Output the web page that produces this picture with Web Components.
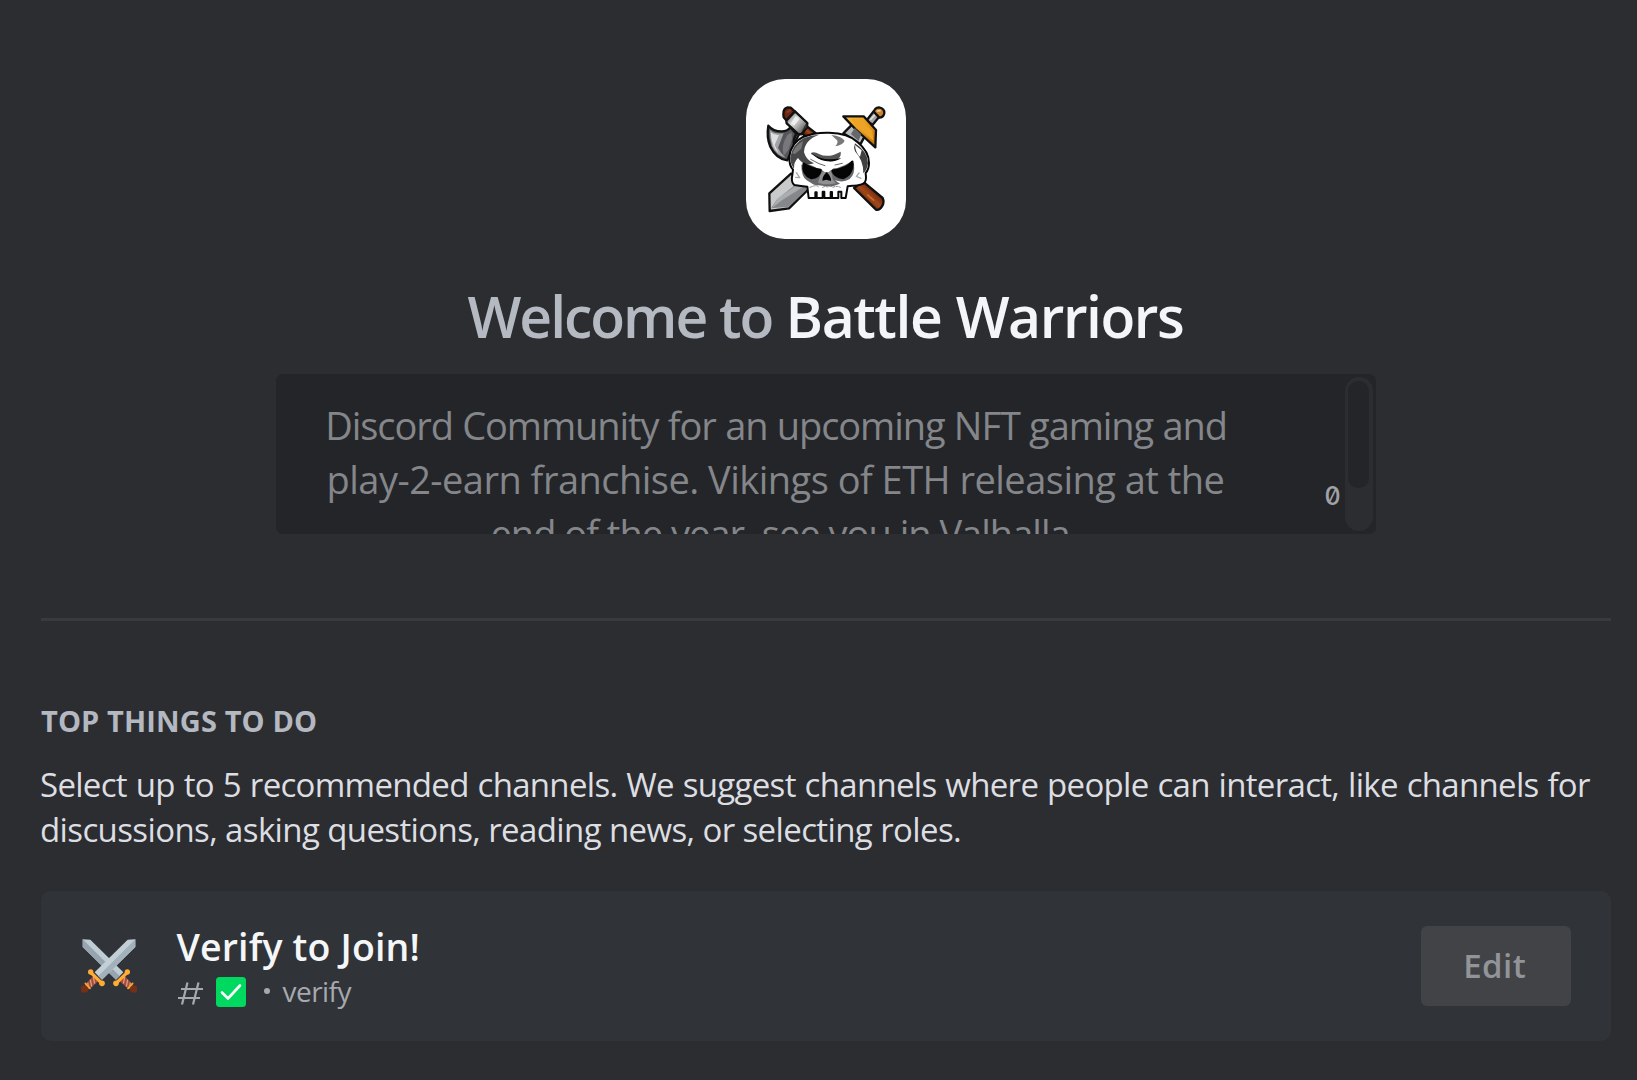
<!DOCTYPE html>
<html lang="en">
<head>
<meta charset="utf-8">
<title>Welcome to Battle Warriors</title>
<style>
html,body{margin:0;height:100%;background:#2c2d31;overflow:hidden}
body{font-family:"Open Sans","Noto Sans",sans-serif}
</style>
</head>
<body>
<welcome-page></welcome-page>
<script>
const define = (name, html, ready) => {
  const t = document.createElement('template');
  t.innerHTML = html;
  customElements.define(name, class extends HTMLElement {
    constructor() {
      super();
      this.attachShadow({ mode: 'open' }).append(t.content.cloneNode(true));
    }
    connectedCallback() { if (ready) ready(this); }
  });
};

/* One line of text whose ink is spread over the given width; gap widens the word spaces. */
define('fit-line', `<style>
:host{display:block;white-space:pre;flex:none}
span{display:inline-block}
</style><span></span>`, el => {
  const span = el.shadowRoot.querySelector('span');
  const text = el.getAttribute('text'), w = +el.getAttribute('ink'), gap = +(el.getAttribute('gap') || 0);
  span.textContent = text;
  const cs = getComputedStyle(span);
  const c = document.createElement('canvas').getContext('2d');
  c.font = `${cs.fontWeight} ${cs.fontSize} ${cs.fontFamily}`;
  const m = c.measureText(text);
  const ink = m.actualBoundingBoxLeft + m.actualBoundingBoxRight + gap * (text.split(' ').length - 1);
  span.style.wordSpacing = gap + 'px';
  if (text.length > 1) span.style.letterSpacing = (w - ink) / (text.length - 1) + 'px';
  span.style.marginLeft = m.actualBoundingBoxLeft + 'px';
  el.style.width = w + 'px';
});

define('server-logo', `<style>
:host{display:block;width:160px;height:160px;border-radius:39px;background:#fff;overflow:hidden}
svg{display:block}
</style>
<svg width="160" height="160" viewBox="30 27 480 480" stroke-linejoin="round" stroke-linecap="round">
<defs>
<linearGradient id="wood" x1="0" y1="1" x2="1" y2="0"><stop offset=".25" stop-color="#4a1708"/><stop offset=".5" stop-color="#a4491b"/><stop offset=".75" stop-color="#5b1f0b"/></linearGradient>
<linearGradient id="steel" x1="0" y1="0" x2="1" y2="1"><stop offset="0" stop-color="#555"/><stop offset=".4" stop-color="#ddd"/><stop offset=".6" stop-color="#aaa"/><stop offset="1" stop-color="#333"/></linearGradient>
<linearGradient id="gold" x1="0" y1="0" x2="1" y2="1"><stop offset="0" stop-color="#f7bd3c"/><stop offset=".5" stop-color="#e79a1b"/><stop offset="1" stop-color="#b96a0a"/></linearGradient>
</defs>
<g stroke="#111" stroke-width="7">
<path d="M178 186L190 192L173 222L168 212Z" fill="#888"/>
<path d="M198 190L214 170L240 190L216 206Z" fill="url(#wood)"/>
<path d="M142 133Q141 116 155 112L164 113L177 125L152 152L143 142Z" fill="#6f2610"/>
<path d="M151 152L177 124L214 159L213 172L196 193L187 192L152 160Z" fill="url(#steel)"/>
<path d="M97 167Q111 184 137 184Q154 184 163 172L181 192Q170 209 174 225L154 271Q121 267 103 230Q91 202 97 167Z" fill="#55565a"/>
<path d="M322 190L348 164L386 199L373 223Z" fill="#b8babd"/>
<path d="M391 152L413 124L431 139L410 164Z" fill="#a6a6a6"/>
<path d="M414 126Q415 113 429 112Q446 115 445 130Q442 143 430 143Z" fill="#c8862c"/>
<path d="M322 139L383 139L420 180L418 232L358 177Z" fill="url(#gold)"/>
<path d="M354 354L381 335L440 384Q446 397 438 409Q430 422 420 419Z" fill="url(#wood)"/>
<path d="M100 370L165 311L235 340L159 415L101 423Z" fill="#c9cacc"/>
</g>
<path d="M102 180Q116 193 143 190L126 233Q135 252 149 263Q121 257 108 229Q101 205 102 180Z" fill="#a3a4a7"/>
<path d="M104 187Q115 197 129 195L116 225L128 250Q106 231 104 187Z" fill="#dedfe0"/>
<path d="M155 194L167 187L168 208L157 240L143 257Q134 224 155 194Z" fill="#77787b"/>
<path d="M165 159L179 138L190 148L174 167Z" fill="#eee"/>
<path d="M197 184L209 162L213 165L211 174Z" fill="#333"/>
<path d="M105 415L122 389L198 328L230 342L158 410Z" fill="#85878a"/>
<path d="M124 386L202 331L224 337L140 389L108 414Z" fill="#aaacae"/>
<path d="M356 174L376 193L367 213L345 192Z" fill="#65676a"/>
<path d="M346 147L377 150L409 183L412 212L364 171Z" fill="#eda426"/>
<path d="M404 148L415 136" stroke="#ddd" stroke-width="5"/><path d="M424 123L432 122" stroke="#f3cf90" stroke-width="5"/>
<path d="M385 367L418 395" stroke="#9c4518" stroke-width="9"/><path d="M395 375L413 391" stroke="#d0702f" stroke-width="4"/>
<path d="M154 126L163 121" stroke="#8f3c1c" stroke-width="6"/>
<path d="M175 345Q164 336 169 315L171 299Q159 286 160 260Q165 218 201 201Q233 187 279 188Q337 189 364 216Q399 244 399 279Q399 298 389 309L390 322Q391 341 373 344Q360 348 350 347L335 349L329 384H316V365H307V384H288V366H284V384H265V365H260V384H242V367H238V384H218L214 350Q195 348 175 345Z" fill="#fff" stroke="#090909" stroke-width="6"/>
<path d="M163 262Q169 222 204 204Q226 195 249 194Q205 210 204 247Q211 271 234 280L214 285Q196 279 186 264Q173 276 174 296Q162 281 163 262Z" fill="#47484a"/>
<path d="M169 250Q178 225 201 213L196 236L177 252Z" fill="#777"/>
<path d="M286 195Q317 199 326 212Q321 225 298 229Q311 214 299 207Z" fill="#797979"/>
<path d="M357 220Q395 244 396 279Q394 299 382 310Q383 272 357 244L354 233Z" fill="#3f4042"/>
<path d="M357 225L377 241L372 260Q359 249 357 225Z" fill="#fff"/>
<path d="M226 248Q236 244 249 252Q276 266 314 245Q318 270 283 274Q254 273 239 259L225 252Z" fill="#555"/>
<path d="M226 248Q258 276 316 264Q298 278 268 273Q242 268 226 248Z" fill="#080808"/>
<path d="M196 284Q224 280 246 296Q260 296 272 306Q286 292 302 295Q328 287 347 274L354 281Q358 313 341 327Q323 339 297 331L312 341L286 350L234 344L212 331Q196 320 196 284Z" fill="#66686a"/>
<path d="M254 312L262 304L272 309L283 303L288 312L290 328L300 340L271 345L246 338Z" fill="#8e9092"/>
<path d="M240 284L267 290L272 301L283 290L300 285L290 297L278 306H266L252 296Z" fill="#fff"/>
<path d="M203 281Q198 313 225 324Q250 323 254 300Q227 296 203 281Z" fill="#050505" stroke="#050505" stroke-width="7"/>
<path d="M349 275Q333 296 290 302Q294 320 322 324Q352 312 349 275Z" fill="#050505" stroke="#050505" stroke-width="7"/>
<path d="M272 307Q258 319 259 332L271 329L285 333Q286 319 272 307Z" fill="#050505"/>
<path d="M224 268L249 281L267 287M319 280L297 285M264 345L278 344" fill="none" stroke="#686868" stroke-width="3"/>
<path d="M181 308L191 323L179 322M369 309L361 319L375 325" fill="none" stroke="#aaa" stroke-width="4"/>
<path d="M222 352Q245 342 248 352M260 352Q268 347 278 352M291 352Q302 346 313 352" fill="none" stroke="#888" stroke-width="3" stroke-dasharray="6 4"/>
</svg>`);

define('hero-blurb', `<style>
:host{display:flex;box-sizing:border-box;width:1100px;height:160px;border-radius:7px;background:#232529;overflow:hidden;padding-right:3.5px;justify-content:space-between}
.t{width:1001px;padding-top:24px;display:flex;flex-direction:column;align-items:center;font-size:38px;line-height:54px;color:#84868a}
.last{margin-left:8px}
.n{width:16px;margin:103.5px 0 0 auto;font:500 25px/36px Inter,sans-serif;font-feature-settings:"zero";color:#a0a2a6}
.s{box-sizing:border-box;width:28px;height:154px;margin:3px 0 0 4px;padding:4px 3.5px;border-radius:14px;background:#2c2d31}
.b{height:107px;border-radius:10px;background:#232529}
</style>
<div class="t"><fit-line text="Discord Community for an upcoming NFT gaming and" gap="0.5" ink="896.5"></fit-line><fit-line text="play-2-earn franchise. Vikings of ETH releasing at the" ink="894"></fit-line><fit-line class="last" text="end of the year, see you in Valhalla" ink="576"></fit-line></div>
<div class="n">0</div><div class="s"><div class="b"></div></div>`);

const sword = (a, b) => `
<path d="M149 14L172 13V36L72 134L50 112Z" fill="${a}"/><path d="M172 13V36L72 134L61 123Z" fill="${b}"/>
<path d="M47 122L62 137L34 163L20 150Z" fill="#a0503c"/>
<path d="M46 126L50 146M37 134L41 155M29 143L32 160" stroke="#e8937a" stroke-width="4"/>
<circle cx="19" cy="162" r="11.5" fill="#75301a"/>
<path d="M22 145L36 160" stroke="#f5a62f" stroke-width="5" stroke-linecap="round"/>
<path d="M38 112L72 145" stroke="#ffac33" stroke-width="10"/>
<circle cx="38" cy="111" r="8" fill="#ffac33"/><circle cx="72" cy="145" r="8.5" fill="#ffac33"/>`;

define('swords-icon', `<style>:host{display:block;width:56px;height:56px;flex:none}svg{display:block}</style>
<svg width="56" height="56" viewBox="9 9 168 168">
<g transform="translate(186 0) scale(-1 1)">${sword('#c0ccd3', '#96a5af')}</g>
<g>${sword('#c3cfd6', '#a3b1ba')}</g>
</svg>`);

define('edit-button', `<style>
:host{display:flex;box-sizing:border-box;width:150px;height:80px;border-radius:6px;background:#424347;color:#929498;font-size:33px;font-weight:600;line-height:79px;justify-content:center}
</style><fit-line text="Edit" ink="59.5"></fit-line>`);

define('channel-card', `<style>
:host{display:flex;box-sizing:border-box;height:150px;padding:0 40px;border-radius:10px;background:#303338;align-items:center}
.x{flex:1;padding-left:39.5px}
.h{font-size:37.5px;font-weight:600;line-height:44px;color:#f5f6f7}
.r{display:flex;align-items:center;height:30px;margin-top:8.5px;color:#a6a9af;font-size:28px}
.r svg{display:block;flex:none}
.hash{margin:3px 0 0 1px}
.ok{margin-left:13px}
.dot{width:6px;height:6px;border-radius:3px;background:#a6a9af;margin:-3px 0 0 18px}
.v{margin:-2px 0 0 13px;line-height:30px}
</style>
<swords-icon></swords-icon>
<div class="x"><fit-line class="h" text="Verify to Join!" ink="241"></fit-line>
<div class="r"><svg class="hash" width="25" height="23" viewBox="0 0 25 23"><path d="M9.5 0.5L4 22.5M20.5 0.5L15 22.5M3 7H25M0 16H22" fill="none" stroke="#a6a9af" stroke-width="2.2"/></svg>
<svg class="ok" width="30" height="30" viewBox="0 0 30 30"><rect width="30" height="30" rx="3.5" fill="#00d95f"/><path d="M6 15.5L12 21.5L24 8.5" fill="none" stroke="#fff" stroke-width="2.6" stroke-linecap="round" stroke-linejoin="round"/></svg>
<span class="dot"></span><fit-line class="v" text="verify" ink="70"></fit-line></div></div>
<edit-button></edit-button>`);

define('welcome-page', `<style>
:host{display:flex;flex-direction:column;box-sizing:border-box;width:1637px;height:1080px;padding:79px 26px 0 41px;background:#2c2d31}
server-logo{margin:0 0 0 705px}
.title{display:flex;gap:19px;margin:45px 0 0 426.5px;font-size:57px;font-weight:600;line-height:64px;color:#b5b9c1}
.name{color:#f4f5f8}
hero-blurb{margin:26px 0 0 235px}
.rule{height:3px;background:#383a3f;margin-top:84px}
.cap{margin-top:82px;font-size:29px;font-weight:700;line-height:36px;color:#b4b8c0}
.p{font-size:33px;line-height:45.3px;color:#dcdee2}
.p1{margin-top:22.5px}
channel-card{margin-top:39px}
</style>
<server-logo></server-logo>
<div class="title"><fit-line text="Welcome to" ink="304"></fit-line><fit-line class="name" text="Battle Warriors" gap="1" ink="392.5"></fit-line></div>
<hero-blurb></hero-blurb>
<div class="rule"></div>
<fit-line class="cap" text="TOP THINGS TO DO" ink="275"></fit-line>
<fit-line class="p p1" text="Select up to 5 recommended channels. We suggest channels where people can interact, like channels for" gap="1" ink="1549"></fit-line>
<fit-line class="p" text="discussions, asking questions, reading news, or selecting roles." ink="919"></fit-line>
<channel-card></channel-card>`);
</script>
</body>
</html>
